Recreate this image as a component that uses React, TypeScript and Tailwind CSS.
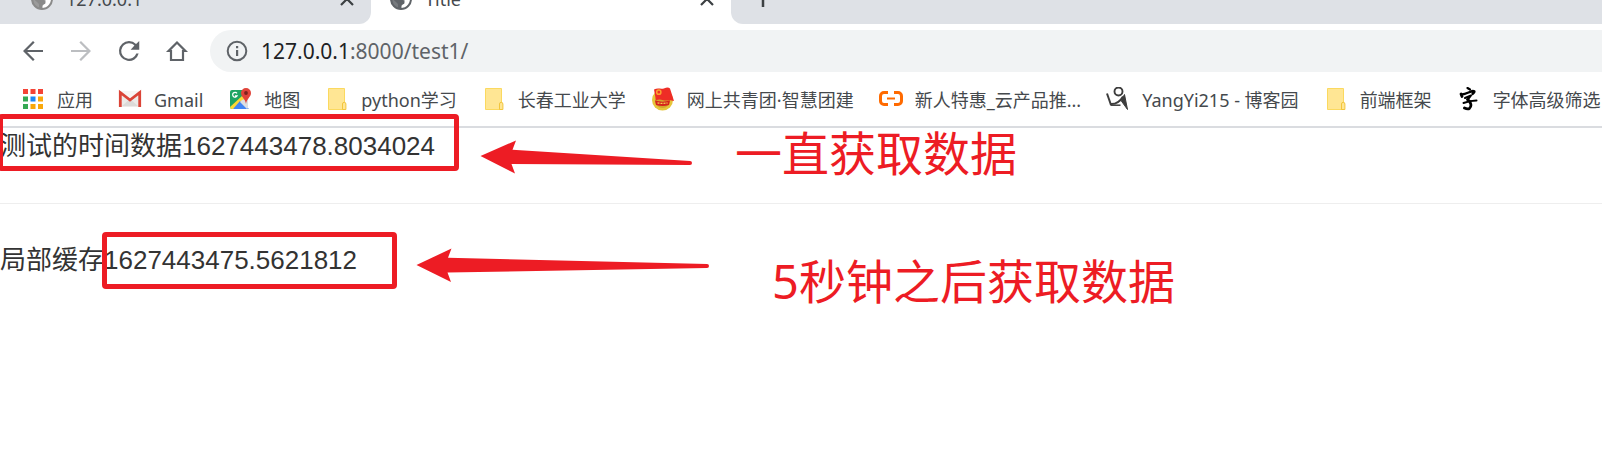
import type { ReactNode } from 'react';

function GlobeIcon({ className }: { className: string }) {
  return (
    <svg viewBox="0 0 24 24" className={className} aria-hidden="true">
      <circle cx="12" cy="12" r="11" fill="currentColor" />
      <path
        d="M9 20.300v-2.500c0-1-.8-1.500-1.500-2.200L3.400 11.600c-.4 4.500 2.300 7.700 5.600 8.700z"
        fill="#fff"
        opacity=".15"
      />
      <path
        d="M13.500 3.300l3.200.8c2.600 1.700 4.300 4.400 4.300 7.900 0 3.800-2.200 6.800-5.200 8.200l-3.300.8v-2.200l1.500-1.500c1.500 0 1.500-1 1.500-2.500v-1.600l-3.800-.4V9.400h1.700c1 0 1.200-.7 1.200-1.600l-.3-1.700c-1 0-1.200-1.600-.8-2.800z"
        fill="#fff"
      />
    </svg>
  );
}

function CloseIcon() {
  return (
    <svg viewBox="0 0 16 16" className="size-4" fill="none" stroke="#3c4043" strokeWidth="2.200" aria-hidden="true">
      <path d="M2 2l12 12M14 2L2 14" />
    </svg>
  );
}

function AppsIcon() {
  const colors = ['#f44336', '#f44336', '#f44336', '#34a853', '#1e88f5', '#f9a80b', '#34a853', '#f9a80b', '#f9a80b'];
  return (
    <svg viewBox="0 0 24 24" className="size-6" aria-hidden="true">
      {colors.map((color, i) => (
        <rect key={i} x={2 + (i % 3) * 7.5} y={2 + Math.floor(i / 3) * 7.5} width="5" height="5" fill={color} />
      ))}
    </svg>
  );
}

function GmailIcon() {
  return (
    <svg viewBox="0 0 24 24" className="size-6" aria-hidden="true">
      <path d="M3 4h18v16H3z" fill="#eceae8" />
      <path d="M4 19l8-7 8 7z" fill="#dcdad8" />
      <path d="M3 4h18l-9 8z" fill="#f7f5f4" />
      <path d="M2.300 20V5.500L12 13l9.700-7.500V20" fill="none" stroke="#db4437" strokeWidth="2.800" />
    </svg>
  );
}

function MapsIcon() {
  return (
    <svg viewBox="0 0 24 24" className="size-6" aria-hidden="true">
      <path d="M4 3h14v10L4 22a2 2 0 0 1-2-2V5a2 2 0 0 1 2-2z" fill="#1fa463" />
      <path d="M2 20L14 9l4 3L5 22H4a2 2 0 0 1-2-2z" fill="#fdd835" />
      <path d="M12 14l9 8H5z" fill="#4285f4" />
      <path d="M14 13l6-2v9a2 2 0 0 1-1 2l-7-7z" fill="#dcdfe2" />
      <path d="M9 6.300A2.400 2.400 0 1 0 9.200 8.800H7" fill="none" stroke="#fff" strokeWidth="1.200" />
      <path d="M18 1a5 5 0 0 0-5 5c0 4 4.300 5.500 5 11 .7-5.500 5-7 5-11a5 5 0 0 0-5-5z" fill="#e0443a" />
      <circle cx="18" cy="6" r="1.900" fill="#7b231e" />
    </svg>
  );
}

function FolderIcon() {
  return (
    <svg viewBox="0 0 24 24" className="size-6" aria-hidden="true">
      <path d="M3.500 1.500h16v21h-16z" fill="#ffe694" stroke="#fbd95f" />
      <path d="M17.500 22.500v-5.500a1.700 1.700 0 0 1 3.400 0v5.500z" fill="#ffe694" stroke="#f3c53c" />
    </svg>
  );
}

function LeagueIcon() {
  return (
    <svg viewBox="0 0 24 24" className="size-6" aria-hidden="true">
      <circle cx="11.500" cy="13" r="10.500" fill="#e6c53a" />
      <circle cx="11.500" cy="13.500" r="7.500" fill="#d3a52c" />
      <path d="M3 2.500c3.500-2 7 0 10.500-1.300 2.500-1 4.500-.6 5.500.3l4 12.500c-4.500-2-7 .2-10.500-.8-4-1.200-5.500-1-7.500.3z" fill="#ee2d26" />
      <circle cx="7.800" cy="5.200" r="2.100" fill="none" stroke="#f9a12e" strokeWidth="1.500" />
      <path d="M4 13.500c5 1.500 10 1.500 15 0l-1 4.500c-4 1.300-9 1.300-13 0z" fill="#d5221c" />
      <path d="M6.500 15.800c3.500.8 7 .8 10 0" fill="none" stroke="#f4cf50" strokeWidth="1.300" strokeDasharray="2 1" />
    </svg>
  );
}

function AliyunIcon() {
  return (
    <svg viewBox="0 0 24 24" className="size-6" fill="none" stroke="#ff6a00" aria-hidden="true">
      <path d="M9 5.500H5a3.500 3.500 0 0 0-3.500 3.500v5A3.500 3.500 0 0 0 5 17.500h4" strokeWidth="3" />
      <path d="M15 5.500h4A3.500 3.500 0 0 1 22.500 9v5a3.500 3.500 0 0 1-3.500 3.500h-4" strokeWidth="3" />
      <path d="M8 11.500h8" strokeWidth="2" />
    </svg>
  );
}

function CnblogsIcon() {
  return (
    <svg viewBox="0 0 24 24" className="size-6" fill="none" stroke="#3d3d3d" aria-hidden="true">
      <circle cx="12.500" cy="4.500" r="4" strokeWidth="1.900" />
      <path d="M1 6.500l4 11.500" strokeWidth="2" />
      <path d="M4 17c5 .5 9.500-1.500 13-7.500" strokeWidth="1.900" />
      <path d="M4.500 18.200h10" strokeWidth="1.500" />
      <path d="M18.500 7.500L21.500 22.500l-6.500-9z" fill="#3d3d3d" strokeWidth="1" />
    </svg>
  );
}

function BrushIcon() {
  return (
    <svg viewBox="0 0 24 24" className="size-6" fill="none" stroke="#000" strokeLinecap="round" strokeLinejoin="round" aria-hidden="true">
      <path d="M10.500 1l2.500 1.500" strokeWidth="2.200" />
      <path d="M4 7l1 2.500" strokeWidth="2.800" />
      <path d="M5 7.500c4-.5 8-3 11-3.500 2.500 0 1.500 1.500-.5 3" strokeWidth="2.300" />
      <path d="M8 11l6-2.500-3 4" strokeWidth="2" />
      <path d="M6.500 16c4-1.500 9-2.500 13-2.500" strokeWidth="2" />
      <path d="M10.500 12.500c3.500 2.500 4.500 6.500 2 8.800-1.500 1.200-3 .7-5-.3" strokeWidth="2.800" />
    </svg>
  );
}

const bookmarks: { label: string; icon: ReactNode }[] = [
  { label: '应用', icon: <AppsIcon /> },
  { label: 'Gmail', icon: <GmailIcon /> },
  { label: '地图', icon: <MapsIcon /> },
  { label: 'python学习', icon: <FolderIcon /> },
  { label: '长春工业大学', icon: <FolderIcon /> },
  { label: '网上共青团·智慧团建', icon: <LeagueIcon /> },
  { label: '新人特惠_云产品推...', icon: <AliyunIcon /> },
  { label: 'YangYi215 - 博客园', icon: <CnblogsIcon /> },
  { label: '前端框架', icon: <FolderIcon /> },
  { label: '字体高级筛选', icon: <BrushIcon /> },
];

function TabStrip() {
  return (
    <div className="flex h-6 items-end overflow-hidden bg-white text-lg text-[#45494d]">
      <div className="flex h-[50px] w-[371px] shrink-0 items-center rounded-br-xl bg-[#dee1e6] pr-4 pl-[30px]">
        <GlobeIcon className="size-6 text-[#8a8a8a]" />
        <span className="ml-3 flex-1">127.0.0.1</span>
        <button aria-label="Close 127.0.0.1">
          <CloseIcon />
        </button>
      </div>
      <div className="flex h-[50px] w-[360px] shrink-0 items-center bg-white pr-4 pl-[18px]">
        <GlobeIcon className="size-6 text-[#5f6368]" />
        <span className="ml-3 flex-1">Title</span>
        <button aria-label="Close Title">
          <CloseIcon />
        </button>
      </div>
      <div className="flex h-[50px] flex-1 items-center rounded-bl-xl bg-[#dee1e6] pl-6">
        <button aria-label="New tab">
          <svg viewBox="0 0 16 16" className="size-4" stroke="#3c4043" strokeWidth="2.500" aria-hidden="true">
            <path d="M8 0v16M0 7.500h16" />
          </svg>
        </button>
      </div>
    </div>
  );
}

function Toolbar() {
  return (
    <div className="flex items-center gap-[18px] pt-1.5 pl-[18px] text-[#5f6368]">
      <button aria-label="Back">
        <svg viewBox="0 0 24 24" className="size-[30px]" fill="currentColor">
          <path d="M20 11.200H7.300l6-6L12 4l-8 8 8 8 1.300-1.200-6-6H20z" />
        </svg>
      </button>
      <button aria-label="Forward" className="text-[#bcbec1]">
        <svg viewBox="0 0 24 24" className="size-[30px]" fill="currentColor">
          <path d="M4 11.200h12.700l-6-6L12 4l8 8-8 8-1.300-1.200 6-6H4z" />
        </svg>
      </button>
      <button aria-label="Reload">
        <svg viewBox="0 0 24 24" className="size-[30px]" fill="currentColor">
          <path d="M17.650 6.350A7.960 7.960 0 0 0 12 4a8 8 0 1 0 7.730 10h-1.900A6.200 6.200 0 1 1 12 5.800c1.700 0 3.200.7 4.350 1.850L13.300 11H20.200V4z" />
        </svg>
      </button>
      <button aria-label="Home">
        <svg viewBox="0 0 30 30" className="size-[30px]" fill="none" stroke="currentColor" strokeWidth="2.200">
          <path d="M15 6.500L6.600 15H9v9h12v-9h2.400z" />
        </svg>
      </button>
      <label className="flex h-[42px] flex-1 items-center rounded-l-full bg-[#f1f3f4] pl-3.5">
        <svg viewBox="0 0 26 26" className="size-[26px]" aria-hidden="true">
          <circle cx="13" cy="13" r="9.300" fill="none" stroke="currentColor" strokeWidth="2" />
          <path d="M12 12h2.200v6H12zM12 8h2.200v2.200H12z" fill="currentColor" />
        </svg>
        <span className="ml-[11px] pt-0.5 text-[21px] text-[#202124]">
          127.0.0.1<span className="text-[#5f6368]">:8000/test1/</span>
        </span>
      </label>
    </div>
  );
}

function BookmarkBar() {
  return (
    <nav className="flex h-[56px] items-center gap-[25px] overflow-hidden border-b-2 border-[#dadce0] pl-[21px] text-lg whitespace-nowrap text-[#45494d]">
      {bookmarks.map(({ label, icon }) => (
        <a key={label} href="#" className="flex shrink-0 items-center gap-3">
          {icon}
          <span className="pt-0.5">{label}</span>
        </a>
      ))}
    </nav>
  );
}

// Red boxes, arrows and notes drawn over the page
function Annotations() {
  return (
    <div className="pointer-events-none absolute inset-0 overflow-hidden text-[47px] leading-none whitespace-nowrap text-[#ed1c24]">
      <div className="absolute top-[114px] -left-0.5 h-[57px] w-[461px] rounded-sm border-5 border-[#ed1c24]" />
      <div className="absolute top-[232px] left-[102px] h-[57px] w-[295px] rounded-sm border-5 border-[#ed1c24]" />
      <svg className="absolute inset-0 size-full" fill="#ed1c24" aria-hidden="true">
        <path d="M480.500 156L516 140.500L512.500 149.700L690 161a2 2 0 0 1 0 4L511.500 164L515 173.500z" />
        <path d="M416.500 265L451.500 248.500L448 257.700L707 264a2 2 0 0 1 0 4L447.500 272.500L451 282z" />
      </svg>
      <p className="absolute top-[130px] left-[735px]">一直获取数据</p>
      <p className="absolute top-[258px] left-[772px]">5秒钟之后获取数据</p>
    </div>
  );
}

export default function App() {
  return (
    <div className="relative min-h-screen overflow-hidden bg-white font-['Noto_Sans','Noto_Sans_CJK_SC',sans-serif]">
      <TabStrip />
      <Toolbar />
      <BookmarkBar />
      <main className="font-['Liberation_Sans','Noto_Sans_CJK_SC',sans-serif] text-[26px] leading-9 text-[#333]">
        <p>测试的时间数据1627443478.8034024</p>
        <hr className="mt-[39px] mb-[38px] border-[#eee]" />
        <p>局部缓存1627443475.5621812</p>
      </main>
      <Annotations />
    </div>
  );
}
